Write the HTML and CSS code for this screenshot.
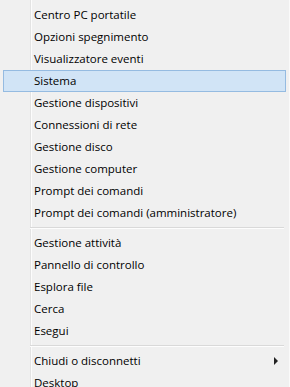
FILE: index.html
```html
<!DOCTYPE html>
<html lang="it">
<head>
  <meta charset="UTF-8" />
  <title>Menu</title>
  <link rel="stylesheet" href="styles.css">
</head>
<body>

  <div class="menu">
    <div class="item">Centro PC portatile</div>
    <div class="item">Opzioni spegnimento</div>
    <div class="item">Visualizzatore eventi</div>
    <div class="item active">Sistema</div>
    <div class="item">Gestione dispositivi</div>
    <div class="item">Connessioni di rete</div>
    <div class="item">Gestione disco</div>
    <div class="item">Gestione computer</div>
    <div class="item">Prompt dei comandi</div>
    <div class="item">Prompt dei comandi (amministratore)</div>

    <div class="sep"></div>

    <div class="item">Gestione attività</div>
    <div class="item">Pannello di controllo</div>
    <div class="item">Esplora file</div>
    <div class="item">Cerca</div>
    <div class="item">Esegui</div>

    <div class="sep"></div>

    <div class="item sub">Chiudi o disconnetti <span class="arrow"></span></div>
    <div class="item">Desktop</div>
  </div>

</body>
</html>
```

FILE: styles.css
```css
* {
  box-sizing: border-box;
  margin: 0;
  padding: 0;
}

body {
  font-family: 'Open Sans', 'Noto Sans', sans-serif;
  font-size: 11.5px;
  background: #f0f0f0;
  color: #000;
  width: 290px;
  height: 387px;
  overflow: hidden;
}

.menu {
  padding-top: 4px;
  height: 100%;
  border-right: 1px solid #fafafa;
  /* gutter line after the icon column */
  background: linear-gradient(to right,
    transparent 30px, #e3e3e3 30px, #e3e3e3 31px,
    #fcfcfc 31px, #fcfcfc 32px, transparent 32px);
}

.item {
  display: flex;
  align-items: center;
  justify-content: space-between;
  height: 22px;
  margin: 0 3px;
  padding: 0 7px 2px 30px;
  border: 1px solid transparent;
  white-space: nowrap;
}

.item.active {
  background: #d1e4f6;
  border-color: #95bbe1;
}

.arrow {
  width: 0;
  height: 0;
  margin-top: 2px;
  border-top: 4px solid transparent;
  border-bottom: 4px solid transparent;
  border-left: 4px solid #222;
}

.sep {
  height: 1px;
  margin: 3px 5px 3px 30px;
  background: #d9d9d9;
  border-bottom: 1px solid #fdfdfd;
  box-sizing: content-box;
}
```
